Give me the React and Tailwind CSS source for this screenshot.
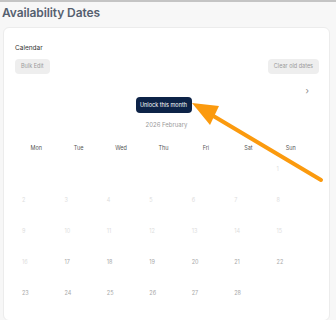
const weekdays = ['Mon', 'Tue', 'Wed', 'Thu', 'Fri', 'Sat', 'Sun']

// Feb 2026 starts on a Sunday
const cells = [...Array(6).fill(null), ...Array.from({ length: 28 }, (_, i) => i + 1)]

function Arrow() {
  return (
    <svg className="pointer-events-none absolute left-0 top-0" width="336" height="320" viewBox="0 0 336 320">
      <line x1="321" y1="178" x2="205" y2="109" stroke="#fb9a0e" strokeWidth="4" strokeLinecap="round" />
      <polygon points="192,101 219,104 210,123" fill="#fb9a0e" />
    </svg>
  )
}

export default function App() {
  return (
    <div className="relative h-[320px] w-[336px] overflow-hidden border-t-2 border-[#c4c4c4] bg-[#f7f7f7] font-['Inter',sans-serif]">
      <h2 className="ml-[2px] mt-[3px] h-[22px] text-[12px] font-semibold leading-[15px] tracking-[-0.1px] text-[#55606f]">
        Availability Dates
      </h2>
      <div className="ml-[3px] w-[327px] rounded-md border border-[#ececec] bg-white px-[11px] pt-[15px] pb-6">
        <p className="text-[6.5px] leading-[10px] text-[#333]">Calendar</p>
        <div className="mt-[6px] flex justify-between">
          <button className="h-[15px] rounded-sm bg-[#eeeeee] px-[6px] text-[5.5px] text-[#9a9a9a]">Bulk Edit</button>
          <button className="mr-[-1px] h-[15px] rounded-sm bg-[#eeeeee] px-[6px] text-[5.5px] text-[#9a9a9a]">Clear old dates</button>
        </div>
        <div className="mt-[12px] flex justify-end pr-[9px] text-[9px] leading-[10px] text-[#888]">›</div>
        <div className="mt-[1px] flex justify-center">
          <button className="mr-[6px] h-[16px] w-[56px] rounded-sm bg-[#0d2347] text-[5.5px] text-white">Unlock this month</button>
        </div>
        <p className="mt-[8px] text-center text-[6px] leading-[8px] text-[#9a9a9a]">2026 February</p>
        <div className="mt-[16px] grid w-[297px] grid-cols-7">
          {weekdays.map((d) => (
            <div key={d} className="h-[6px] text-center text-[5.5px] leading-[6px] text-[#555]">
              {d}
            </div>
          ))}
        </div>
        <div className="mt-[15px] grid w-[297px] grid-cols-7 gap-y-[25px]">
          {cells.map((d, i) => (
            <div
              key={i}
              className={`h-[6px] pl-[7px] text-[5.5px] leading-[6px] ${d !== null && d >= 17 ? 'text-[#a8a8a8]' : 'text-[#dddddd]'}`}
            >
              {d}
            </div>
          ))}
        </div>
      </div>
      <Arrow />
    </div>
  )
}
